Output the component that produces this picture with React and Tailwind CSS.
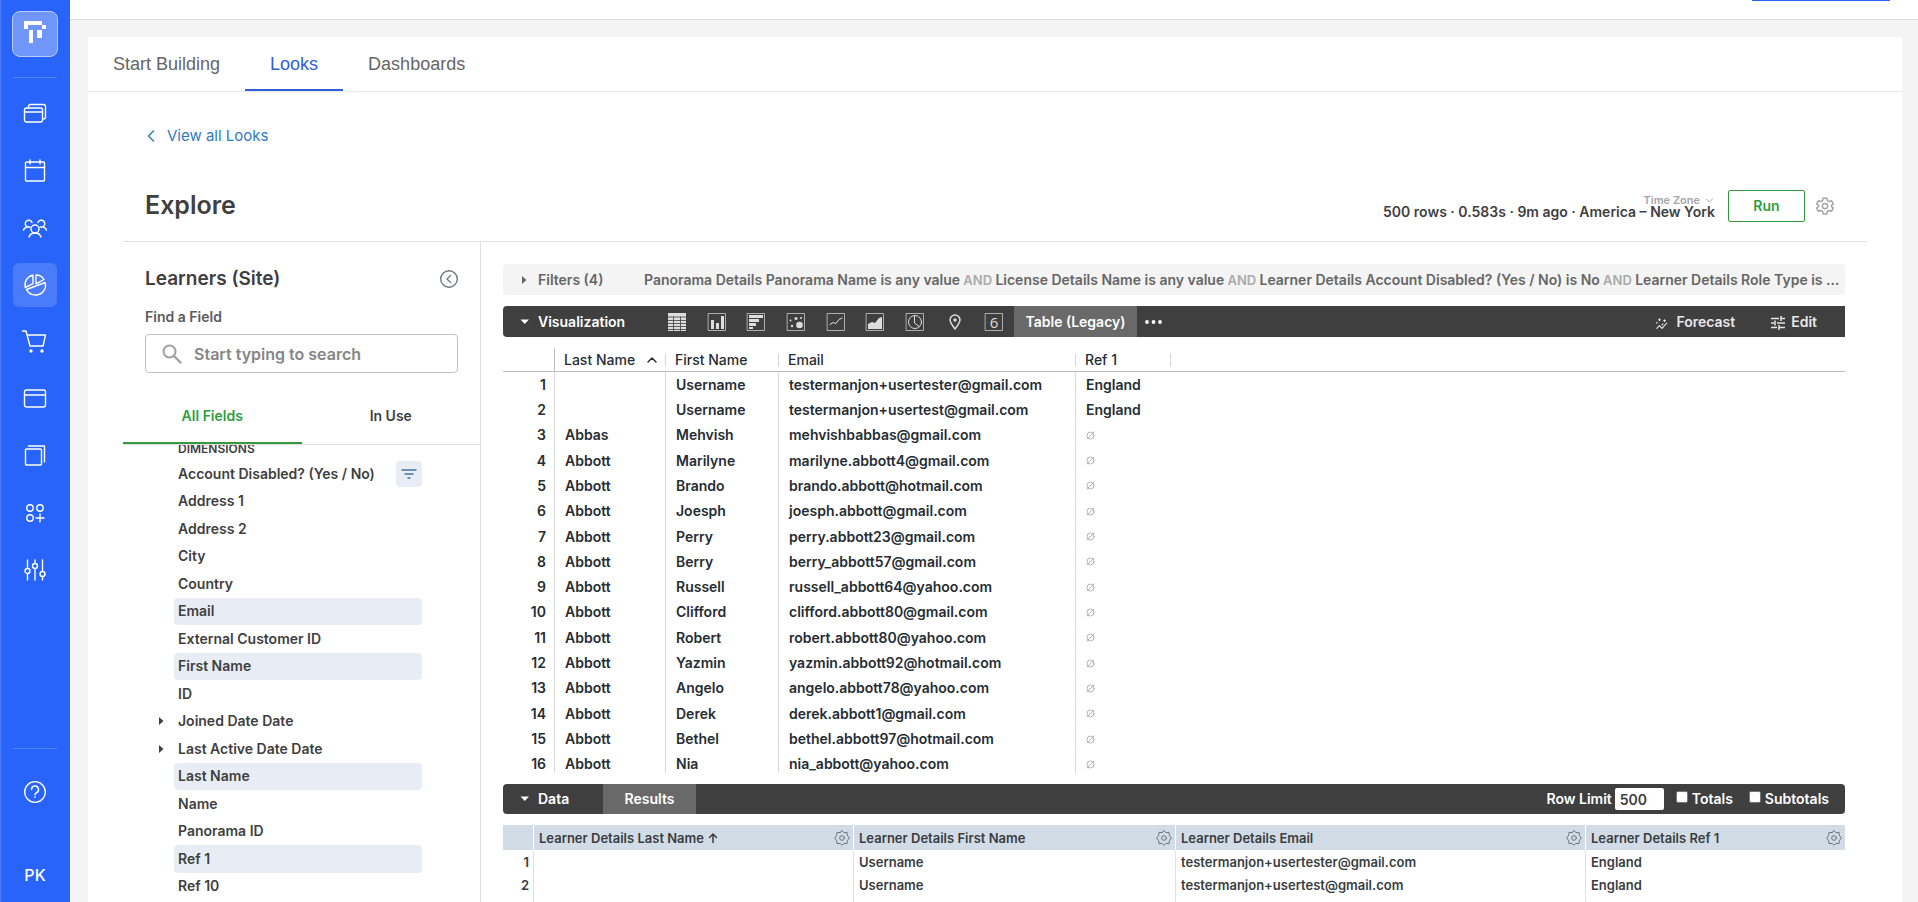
import React from 'react';

const navIcons = [
  {
    label: 'Courses',
    art: (
      <>
        <rect x="0.500" y="5" width="18" height="14" rx="2" />
        <path d="M0.500 9h18M4.500 5V3.500a2 2 0 0 1 2-2h13a2 2 0 0 1 2 2V14a2 2 0 0 1-2 2h-1" />
      </>
    ),
  },
  {
    label: 'Calendar',
    art: (
      <>
        <rect x="1.500" y="2" width="19" height="19" rx="1" />
        <path d="M1.500 7.500h19M6 0v4M16 0v4" />
      </>
    ),
  },
  {
    label: 'Users',
    art: (
      <>
        <circle cx="11" cy="12" r="4" />
        <path d="M5 20c1-3 3-4 6-4s5 1 6 4M8 5.500a3.500 3.500 0 1 0-4.500 4.500C1.500 10.300 0 11.500-.500 13M14 5.500a3.500 3.500 0 1 1 4.500 4.500c2 .300 3.500 1.500 4 3M3.500 10h2.500M18.500 10H16" />
      </>
    ),
  },
  {
    label: 'Analytics',
    active: true,
    art: (
      <path d="M9 1.200v8.500L1.200 13.500C0 7.500 3.500 2.200 9 1.200zM12 1c4 0 6.500 2 8 4.500L12 9.800zM21 8.500c2 6-2.500 12.500-9.500 12.500-4 0-7.500-2-9-5.500z" />
    ),
  },
  {
    label: 'Shop',
    art: (
      <>
        <path d="M-1.500 0H2l4 15h13M3 4h18.500L19 15" />
        <circle cx="7" cy="20" r="1" fill="currentColor" />
        <circle cx="18" cy="20" r="1" fill="currentColor" />
      </>
    ),
  },
  {
    label: 'Pages',
    art: (
      <>
        <rect x="0.500" y="2" width="21" height="17" rx="2" />
        <path d="M0.500 7h21" />
      </>
    ),
  },
  {
    label: 'Library',
    art: (
      <>
        <rect x="1.500" y="4" width="16" height="16" rx="1" />
        <path d="M4.500 1h16v16" />
      </>
    ),
  },
  {
    label: 'Integrations',
    art: (
      <>
        <circle cx="6" cy="6" r="3.200" />
        <circle cx="16" cy="6" r="3.200" />
        <circle cx="6" cy="16" r="3.200" />
        <path d="M16 12v8M12 16h8" />
      </>
    ),
  },
  {
    label: 'Settings',
    art: (
      <>
        <path d="M3.500 1v8M3.500 15v6M11 1v3M11 10v11M18.500 1v11M18.500 18v3" />
        <circle cx="3.500" cy="12" r="2.500" />
        <circle cx="11" cy="7" r="2.500" />
        <circle cx="18.500" cy="15" r="2.500" />
      </>
    ),
  },
];

const chartTypes = [
  {
    label: 'Table',
    art: (
      <>
        <path d="M0 0h18v18H0z" fill="currentColor" stroke="none" />
        <path d="M0 4h18M0 7.500h18M0 10.500h18M0 13.500h18M0 16.500h18M5.500 4v14M12.500 4v14" stroke="#3f3f3f" strokeWidth="0.800" />
      </>
    ),
  },
  {
    label: 'Column',
    boxed: true,
    art: <path d="M3 7h3v9H3zM8 10h3v6H8zM13 3h3v13h-3z" fill="currentColor" stroke="none" />,
  },
  {
    label: 'Bar',
    boxed: true,
    art: <path d="M2 2h14v3H2zM2 6h10v3H2zM2 10h7v3H2zM2 14h4v2H2z" fill="currentColor" stroke="none" />,
  },
  {
    label: 'Scatter',
    boxed: true,
    art: (
      <g fill="currentColor" stroke="none">
        <circle cx="12.500" cy="12" r="3.300" />
        <circle cx="9" cy="5.500" r="1.500" />
        <circle cx="3.500" cy="7.500" r="1" />
        <circle cx="5" cy="13" r="1.200" />
        <circle cx="14" cy="5" r="1" />
      </g>
    ),
  },
  { label: 'Line', boxed: true, art: <path d="M3 11.500l3-2 3 1 3-4 3-1.500" /> },
  {
    label: 'Area',
    boxed: true,
    art: <path d="M2 16v-5l4-2 3 1 4-5 3-1v12z" fill="currentColor" stroke="none" />,
  },
  {
    label: 'Pie',
    boxed: true,
    art: (
      <>
        <circle cx="9" cy="9" r="6.500" />
        <path d="M8.500 2.500V10l4.500 3.500" />
      </>
    ),
  },
  {
    label: 'Map',
    art: (
      <>
        <path d="M9 16C6 12 4 9.500 4 7a5 5 0 0 1 10 0c0 2.500-2 5-5 9z" strokeWidth="1.500" />
        <circle cx="9" cy="7" r="1.700" fill="currentColor" stroke="none" />
      </>
    ),
  },
  {
    label: 'Single value',
    boxed: true,
    art: (
      <text x="9" y="14.500" textAnchor="middle" fontSize="15" fontWeight="400" fontFamily="Open Sans, sans-serif" fill="currentColor" stroke="none">
        6
      </text>
    ),
  },
];

const fields = [
  { name: 'Account Disabled? (Yes / No)', filtered: true },
  { name: 'Address 1' },
  { name: 'Address 2' },
  { name: 'City' },
  { name: 'Country' },
  { name: 'Email', selected: true },
  { name: 'External Customer ID' },
  { name: 'First Name', selected: true },
  { name: 'ID' },
  { name: 'Joined Date Date', group: true },
  { name: 'Last Active Date Date', group: true },
  { name: 'Last Name', selected: true },
  { name: 'Name' },
  { name: 'Panorama ID' },
  { name: 'Ref 1', selected: true },
  { name: 'Ref 10' },
];

const rows = [
  ['', 'Username', 'testermanjon+usertester@gmail.com', 'England'],
  ['', 'Username', 'testermanjon+usertest@gmail.com', 'England'],
  ['Abbas', 'Mehvish', 'mehvishbabbas@gmail.com'],
  ['Abbott', 'Marilyne', 'marilyne.abbott4@gmail.com'],
  ['Abbott', 'Brando', 'brando.abbott@hotmail.com'],
  ['Abbott', 'Joesph', 'joesph.abbott@gmail.com'],
  ['Abbott', 'Perry', 'perry.abbott23@gmail.com'],
  ['Abbott', 'Berry', 'berry_abbott57@gmail.com'],
  ['Abbott', 'Russell', 'russell_abbott64@yahoo.com'],
  ['Abbott', 'Clifford', 'clifford.abbott80@gmail.com'],
  ['Abbott', 'Robert', 'robert.abbott80@yahoo.com'],
  ['Abbott', 'Yazmin', 'yazmin.abbott92@hotmail.com'],
  ['Abbott', 'Angelo', 'angelo.abbott78@yahoo.com'],
  ['Abbott', 'Derek', 'derek.abbott1@gmail.com'],
  ['Abbott', 'Bethel', 'bethel.abbott97@hotmail.com'],
  ['Abbott', 'Nia', 'nia_abbott@yahoo.com'],
];

const filters = [
  'Panorama Details Panorama Name is any value',
  'License Details Name is any value',
  'Learner Details Account Disabled? (Yes / No) is No',
  'Learner Details Role Type is any value',
];

const Svg = ({ size, box, className = '', children }) => (
  <svg
    width={size}
    height={size}
    viewBox={`0 0 ${box} ${box}`}
    fill="none"
    stroke="currentColor"
    strokeLinecap="round"
    strokeLinejoin="round"
    className={`shrink-0 overflow-visible ${className}`}
    aria-hidden="true"
  >
    {children}
  </svg>
);

const Caret = ({ down }) => (
  <svg width="10" height="10" viewBox="0 0 10 10" fill="currentColor" className="shrink-0" aria-hidden="true">
    {down ? <path d="M1.500 2.500H10L5.750 7z" /> : <path d="M3 1v8l4.500-4z" />}
  </svg>
);

// eight-lobed cog used in the result table headers
const Cog = () => (
  <Svg size={16} box={24}>
    <circle cx="12" cy="12" r="3.500" strokeWidth="1.500" />
    <path
      strokeWidth="1.500"
      d="M12 1l3 3 4.500-.500.500 4.500 3 4-3 4-.500 4.500L15 20l-3 3-3-3-4.500.500L4 16l-3-4 3-4 .500-4.500L9 4z"
    />
  </Svg>
);

const SideNav = () => (
  <nav className="flex w-[70px] shrink-0 flex-col items-center bg-[#2864fa] text-white shadow-[inset_1px_0_#4a7cfb]">
    <a href="#home" aria-label="Home" className="mt-[11px] flex h-[46px] w-[46px] items-center justify-center rounded-lg border border-[#b9ccfd] bg-[#7096fb]">
      <svg width="22" height="22" viewBox="0 0 22 22" fill="currentColor" className="mb-1" aria-hidden="true">
        <path d="M0 0h18v4H4v4H0zM18 4h4v4h-4zM5 9h4v13H5zM13 9h5v8h-5z" />
      </svg>
    </a>
    <div className="mt-5 mb-3.5 h-px w-11 bg-[#5484fb]" />
    <div className="flex flex-col gap-[13px]">
      {navIcons.map((item) => (
        <a
          key={item.label}
          href="#nav"
          aria-label={item.label}
          className={`flex h-11 w-11 items-center justify-center rounded-md ${item.active ? 'bg-[#4a7bfa]' : ''}`}
        >
          <Svg size={22} box={22}>
            <g strokeWidth="1.400">{item.art}</g>
          </Svg>
        </a>
      ))}
    </div>
    <div className="mt-auto h-px w-11 bg-[#5484fb]" />
    <a href="#help" aria-label="Help" className="mt-8">
      <Svg size={22} box={22}>
        <circle cx="11" cy="11" r="10.300" strokeWidth="1.300" />
        <path d="M7.500 8.500a3.500 3.500 0 1 1 5 3.200c-1 .500-1.500 1-1.500 2M11 16v.300" strokeWidth="1.500" />
      </Svg>
    </a>
    <button type="button" className="mt-[61px] mb-4 text-base leading-[22px] font-medium">
      PK
    </button>
  </nav>
);

const FieldPicker = () => (
  <aside className="flex w-[358px] shrink-0 flex-col border-r border-[#dedfe0]">
    <div className="pr-[22px] pl-[22px]">
      <div className="mt-[23px] flex h-7 items-center justify-between">
        <h2 className="text-[19px] font-semibold">Learners (Site)</h2>
        <button type="button" aria-label="Collapse" className="text-[#707781]">
          <Svg size={18} box={18}>
            <circle cx="9" cy="9" r="8.300" strokeWidth="1.400" />
            <path d="M10.500 5.500L7 9l3.500 3.500" strokeWidth="1.400" />
          </Svg>
        </button>
      </div>
      <label htmlFor="field-search" className="mt-3.5 block text-sm leading-5 font-semibold text-[#5c5c5c]">
        Find a Field
      </label>
      <div className="mt-[7px] flex h-[39px] items-center gap-3 rounded border border-[#c1c1c1] px-4">
        <Svg size={20} box={20} className="text-[#a0a0a0]">
          <circle cx="7.500" cy="7.500" r="6" strokeWidth="2" />
          <path d="M12 12l6.500 6.500" strokeWidth="2.400" />
        </Svg>
        <input
          id="field-search"
          placeholder="Start typing to search"
          className="min-w-0 flex-1 text-base font-semibold outline-none placeholder:text-[#858585]"
        />
      </div>
    </div>
    <div className="mt-[15px] flex h-[57px] shrink-0 border-b border-[#dedfe0] text-sm font-semibold">
      <button type="button" className="flex-1 border-b-2 border-[#36993f] pt-0.5 text-[#2f9e3d]">
        All Fields
      </button>
      <button type="button" className="flex-1 border-b-2 border-transparent pt-0.5">
        In Use
      </button>
    </div>
    <div className="min-h-0 flex-1 overflow-hidden pl-[51px]">
      <div className="h-[15px] pl-1 text-xs leading-2 font-semibold">DIMENSIONS</div>
      <ul className="grid h-[440px] w-[248px] auto-rows-fr text-sm font-semibold">
        {fields.map((field) => (
          <li
            key={field.name}
            className={`relative flex items-center rounded pl-1 ${field.selected ? 'bg-[#e8edf5]' : ''}`}
          >
            {field.group && (
              <span className="absolute -left-[18px]">
                <Caret />
              </span>
            )}
            {field.name}
            {field.filtered && (
              <button
                type="button"
                aria-label="Filter by field"
                className="ml-auto flex h-[26px] w-[26px] items-center justify-center rounded bg-[#e8edf5] text-[#46719d]"
              >
                <Svg size={16} box={16}>
                  <path d="M0.500 4h15M3.500 8h9M6.500 12h3" strokeWidth="1.500" strokeLinecap="butt" />
                </Svg>
              </button>
            )}
          </li>
        ))}
      </ul>
    </div>
  </aside>
);

const FiltersBar = () => (
  <div className="mt-[22px] flex h-[31px] shrink-0 items-center rounded bg-[#f4f4f4] pr-1 pl-4 text-sm font-semibold text-[#666]">
    <button type="button" className="flex w-[125px] shrink-0 items-center gap-[9px]">
      <Caret />
      Filters (4)
    </button>
    <p className="min-w-0 flex-1 truncate">
      {filters.map((text, i) => (
        <React.Fragment key={text}>
          {i > 0 && <span className="text-[13px] text-[#aaa]"> AND </span>}
          {text}
        </React.Fragment>
      ))}
    </p>
  </div>
);

const VisualizationBar = () => (
  <div className="mt-[11px] flex h-[31px] shrink-0 items-center rounded-l bg-[#3f3f3f] pl-4 text-sm font-semibold text-white">
    <button type="button" className="flex w-[138px] items-center gap-[9px]">
      <Caret down />
      Visualization
    </button>
    <div className="flex w-[357px] text-[#ddd]">
      {chartTypes.map((chart) => (
        <button key={chart.label} type="button" aria-label={chart.label} className="flex flex-1 justify-center">
          <Svg size={18} box={18}>
            {chart.boxed && <rect x="0.500" y="0.500" width="17" height="17" strokeWidth="1" strokeOpacity="0.7" />}
            {chart.art}
          </Svg>
        </button>
      ))}
    </div>
    <button type="button" className="h-full w-[123px] bg-[#696969]">
      Table (Legacy)
    </button>
    <button type="button" aria-label="More charts" className="ml-2">
      <svg width="17" height="6" viewBox="0 0 17 6" fill="currentColor" aria-hidden="true">
        <circle cx="2" cy="3" r="1.900" />
        <circle cx="8.500" cy="3" r="1.900" />
        <circle cx="15" cy="3" r="1.900" />
      </svg>
    </button>
    <button type="button" className="ml-auto flex items-center gap-2 text-[#e8e8e8]">
      <Svg size={12} box={14} className="mt-1">
        <path d="M1 12l3-3 3 3 5.500-6M7 8l1-1M4 1v2M3 2h2M10 2v2M9 3h2M1 5v1" strokeWidth="1.300" />
      </Svg>
      Forecast
    </button>
    <button type="button" className="mr-7 ml-9 flex items-center gap-1.5 text-[#e8e8e8]">
      <Svg size={14} box={14} className="mt-0.5">
        <path d="M0 2.500h8M10 2.500h4M10 0v5M0 7h3M6 7h8M4 4.500v5M0 11.500h6M8 11.500h6M8 9v5" strokeWidth="1.500" strokeLinecap="butt" />
      </Svg>
      Edit
    </button>
  </div>
);

const HeadCell = ({ children }) => (
  <th className="p-0 text-left font-medium">
    <div className="flex h-3 items-center border-r border-[#d9d9d9] pr-2 pl-[9px]">{children}</div>
  </th>
);

const LegacyTable = () => (
  <div className="mt-[11px] h-[425px] shrink-0 overflow-hidden">
    <table className="h-[429px] w-full table-fixed border-separate border-spacing-0 text-sm text-[#262d33]">
      <colgroup>
        <col className="w-[52px]" />
        <col className="w-[111px]" />
        <col className="w-[113px]" />
        <col className="w-[297px]" />
        <col className="w-[95px]" />
        <col />
      </colgroup>
      <thead>
        <tr className="h-6 *:border-b *:border-b-[#bfbfbf]">
          <th aria-label="Row" className="border-r border-r-[#bfbfbf] p-0" />
          <HeadCell>
            Last Name
            <Svg size={10} box={10} className="ml-auto">
              <path d="M1 7l4-4 4 4" strokeWidth="1.500" />
            </Svg>
          </HeadCell>
          <HeadCell>First Name</HeadCell>
          <HeadCell>Email</HeadCell>
          <HeadCell>Ref 1</HeadCell>
          <td />
        </tr>
      </thead>
      <tbody className="font-semibold">
        {rows.map(([last, first, email, ref], i) => (
          <tr key={email} className="*:border-r-[#d9d9d9] *:border-b *:border-b-white *:pt-px *:pb-0">
            <td className="border-r pr-2 text-right">{i + 1}</td>
            <td className="border-r pl-2.5">{last}</td>
            <td className="border-r pl-2.5">{first}</td>
            <td className="border-r pl-2.5">{email}</td>
            <td className="pl-2.5">
              {ref || (
                <Svg size={9} box={9} className="text-[#b5b5b5]">
                  <circle cx="4.500" cy="4.500" r="3.500" />
                  <path d="M1 8l7-7" />
                </Svg>
              )}
            </td>
            <td />
          </tr>
        ))}
      </tbody>
    </table>
  </div>
);

const DataBar = () => (
  <div className="mt-[11px] flex h-[30px] shrink-0 items-center rounded bg-[#3f3f3f] pr-4 pl-4 text-sm font-semibold text-white">
    <button type="button" className="flex w-[84px] items-center gap-[9px]">
      <Caret down />
      Data
    </button>
    <button type="button" className="h-full w-[93px] bg-[#696969]">
      Results
    </button>
    <label htmlFor="row-limit" className="mr-[3px] ml-auto">
      Row Limit
    </label>
    <input
      id="row-limit"
      defaultValue="500"
      className="mr-3 h-[22px] w-[49px] rounded-xs bg-white pl-[5px] text-sm font-semibold text-[#3f3f3f]"
    />
    <label className="mr-4 flex items-center gap-1">
      <input type="checkbox" className="mb-1 h-3 w-3 appearance-none rounded-xs border border-[#767676] bg-white" />
      Totals
    </label>
    <label className="flex items-center gap-1">
      <input type="checkbox" className="mb-1 h-3 w-3 appearance-none rounded-xs border border-[#767676] bg-white" />
      Subtotals
    </label>
  </div>
);

const ResultsTable = () => (
  <table className="mt-[11px] w-full table-fixed border-separate border-spacing-0 text-[13px] leading-4 font-semibold text-[#3a3d40]">
    <colgroup>
      <col className="w-[31px]" />
      <col className="w-[320px]" />
      <col className="w-[322px]" />
      <col className="w-[410px]" />
      <col />
    </colgroup>
    <thead>
      <tr className="h-[25px] bg-[#d2dce7] *:border-r *:border-white *:last:border-r-0">
        <th aria-label="Row" className="p-0" />
        {['Last Name', 'First Name', 'Email', 'Ref 1'].map((name, i) => (
          <th key={name} className="py-0 pr-[3px] pl-[5px] text-left font-semibold">
            <div className="flex items-center justify-between">
              <span className="flex items-center gap-1">
                Learner Details {name}
                {i === 0 && (
                  <Svg size={10} box={10}>
                    <path d="M5 9.500V1M1.500 4.500L5 1l3.500 3.500" strokeWidth="1.500" />
                  </Svg>
                )}
              </span>
              <button type="button" aria-label={`${name} options`} className="text-[#6b747d]">
                <Cog />
              </button>
            </div>
          </th>
        ))}
      </tr>
    </thead>
    <tbody>
      {rows.slice(0, 3).map(([last, first, email, ref], i) => (
        <tr key={email} className="h-[23px] *:border-r *:border-b *:border-r-[#e0e0e0] *:border-b-white *:pt-0.5 *:pb-0 *:pl-[5px] *:last:border-r-0">
          <td className="pr-1 text-right">{i + 1}</td>
          <td>{last}</td>
          <td>{first}</td>
          <td>{email}</td>
          <td>{ref}</td>
        </tr>
      ))}
    </tbody>
  </table>
);

const ExploreHeader = () => (
  <header className="flex h-[72px] shrink-0 items-center border-b border-[#dedfe0] pt-px pr-[33px] pl-[22px]">
    <h1 className="mr-auto text-[25px] font-semibold">Explore</h1>
    <div className="mr-[13px] text-right">
      <button type="button" className="mr-0.5 ml-auto flex items-center gap-1.5 text-[11px] leading-3 font-semibold text-[#a5a5a5]">
        Time Zone
        <Svg size={7} box={7}>
          <path d="M0.500 2l3 3 3-3" />
        </Svg>
      </button>
      <p className="text-sm leading-3 font-semibold">500 rows · 0.583s · 9m ago · America – New York</p>
    </div>
    <button type="button" className="h-8 w-[77px] rounded-xs border border-[#36993f] text-sm font-semibold text-[#2f9e3d]">
      Run
    </button>
    <button type="button" aria-label="Settings" className="ml-[11px] text-[#a5a5a5]">
      <Svg size={18} box={24}>
        <circle cx="12" cy="12" r="3.500" strokeWidth="2" />
        <path
          strokeWidth="2"
          d="M9.500 1.500h5l.600 3.300 2.300 1.300 3.200-1.200 2.500 4.300-2.600 2.200v1.200l2.600 2.200-2.500 4.300-3.200-1.200-2.300 1.300-.600 3.300h-5l-.600-3.300-2.300-1.300-3.200 1.200-2.500-4.300 2.600-2.200v-1.200L.900 9.200l2.500-4.300 3.200 1.200 2.300-1.300z"
        />
      </Svg>
    </button>
  </header>
);

const tabs = ['Start Building', 'Looks', 'Dashboards'];

const App = () => (
  <div className="flex h-screen overflow-hidden bg-[#f4f4f4] font-['Inter',sans-serif] text-[#3f3f3f]">
    <SideNav />
    <div className="flex min-w-0 flex-1 flex-col">
      <div className="flex h-5 shrink-0 justify-end border-b border-[#dadada] bg-white pr-7">
        <div className="h-px w-[138px] bg-[#2864fa]" />
      </div>
      <main className="mt-[17px] mr-4 ml-[18px] flex min-h-0 flex-1 flex-col bg-white">
        <nav className="flex h-[55px] shrink-0 border-b border-[#e8e8e8] font-['Liberation_Sans',sans-serif] text-lg">
          {tabs.map((tab) => (
            <a
              key={tab}
              href="#tab"
              className={`flex items-center border-b-2 px-[25px] pt-0.5 ${tab === 'Looks' ? 'border-[#2f5fd9] text-[#2f5fd9]' : 'border-transparent text-[#666]'}`}
            >
              {tab}
            </a>
          ))}
        </nav>
        <a href="#looks" className="mt-8 ml-[58px] flex items-center gap-[11px] self-start text-[15px] leading-6 text-[#2f7cba]">
          <Svg size={10} box={10}>
            <path d="M7.500 0L2.500 5l5 5" strokeWidth="1.400" />
          </Svg>
          View all Looks
        </a>
        <section className="mt-[22px] mr-[35px] ml-[35px] flex min-h-0 flex-1 flex-col">
          <ExploreHeader />
          <div className="flex min-h-0 flex-1">
            <FieldPicker />
            <div className="mr-[22px] ml-[22px] flex min-w-0 flex-1 flex-col">
              <FiltersBar />
              <VisualizationBar />
              <LegacyTable />
              <DataBar />
              <ResultsTable />
            </div>
          </div>
        </section>
      </main>
    </div>
  </div>
);

export default App;
